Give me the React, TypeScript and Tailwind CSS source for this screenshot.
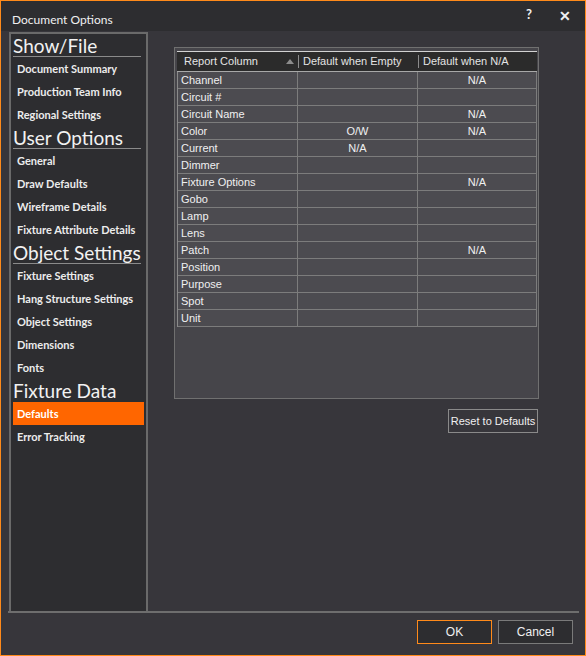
import React from 'react';

type Section = { title: string; line: boolean; items: string[] };

const sections: Section[] = [
  { title: 'Show/File', line: true, items: ['Document Summary', 'Production Team Info', 'Regional Settings'] },
  { title: 'User Options', line: true, items: ['General', 'Draw Defaults', 'Wireframe Details', 'Fixture Attribute Details'] },
  { title: 'Object Settings', line: true, items: ['Fixture Settings', 'Hang Structure Settings', 'Object Settings', 'Dimensions', 'Fonts'] },
  { title: 'Fixture Data', line: false, items: ['Defaults', 'Error Tracking'] },
];

const rows: [string, string, string][] = [
  ['Channel', '', 'N/A'],
  ['Circuit #', '', ''],
  ['Circuit Name', '', 'N/A'],
  ['Color', 'O/W', 'N/A'],
  ['Current', 'N/A', ''],
  ['Dimmer', '', ''],
  ['Fixture Options', '', 'N/A'],
  ['Gobo', '', ''],
  ['Lamp', '', ''],
  ['Lens', '', ''],
  ['Patch', '', 'N/A'],
  ['Position', '', ''],
  ['Purpose', '', ''],
  ['Spot', '', ''],
  ['Unit', '', ''],
];

const ui = "font-['Lato',sans-serif]";
const grid = "font-['Liberation_Sans',Arial,sans-serif]";

const Sidebar = () => (
  <div className="ml-[1px] mt-[1px] w-[139px] border-2 border-b-0 border-[#6a6a6a] bg-[#2d2d30] px-[2px]">
    {sections.map((s) => (
      <div key={s.title}>
        <div
          className={`mr-[3px] h-[23px] whitespace-nowrap pt-[1px] text-[19px] leading-[22px] text-[#f2f2f2] ${s.line ? 'border-b border-[#8a8a8a]' : ''}`}
        >
          {s.title}
        </div>
        {s.items.map((item) => (
          <div
            key={item}
            className={`flex h-[23px] items-center whitespace-nowrap pl-[4px] pt-[2px] text-[11px] font-bold ${
              item === 'Defaults' ? 'bg-[#ff6600] text-white' : 'text-[#ececec]'
            }`}
          >
            {item}
          </div>
        ))}
      </div>
    ))}
  </div>
);

const Table = () => (
  <div className="mt-[16px] h-[352px] w-[365px] border border-[#707070] bg-[#46454a] pl-[2px] pt-[3px]">
    <div className={`${grid} flex h-[21px] w-[360px] items-center border-y border-t-[#d2d2d2] border-b-[#a8a8a8] bg-[#2b2b2b] text-[11px] text-[#e4e4e4]`}>
      <div className="relative flex h-full w-[121px] items-center pl-[7px]">
        Report Column
        <svg className="absolute right-[4px] top-[7px]" width="8" height="5" viewBox="0 0 8 5">
          <path d="M0 5 L4 0 L8 5 Z" fill="#8c8c8c" />
        </svg>
      </div>
      <div className="h-[13px] w-px bg-[#8c8c8c]" />
      <div className="w-[119px] pl-[4px]">Default when Empty</div>
      <div className="h-[13px] w-px bg-[#8c8c8c]" />
      <div className="flex-1 pl-[4px]">Default when N/A</div>
    </div>
    <div className={`${grid} w-[360px] border-l border-[#8a8a8a] text-[11px] text-[#f0f0f0]`}>
      {rows.map(([name, empty, na]) => (
        <div key={name} className="flex h-[17px] border-b border-[#7c7c7c] bg-[#4c4b50]">
          <div className="flex w-[120px] items-center border-r border-[#7c7c7c] pl-[3px]">{name}</div>
          <div className="flex w-[120px] items-center justify-center border-r border-[#7c7c7c]">{empty}</div>
          <div className="flex w-[119px] items-center justify-center border-r border-[#7c7c7c]">{na}</div>
        </div>
      ))}
    </div>
  </div>
);

export default function App() {
  return (
    <div className={`${ui} flex h-[656px] w-[586px] flex-col border border-[#ff8a1a] bg-[#37363b]`}>
      <div className="flex h-[30px] shrink-0 items-center bg-[#2d2d30] pl-[11px] pr-[14px] text-[12px] text-[#f0f0f0]">
        <span className="pt-[7px]">Document Options</span>
        <span className="ml-auto pb-[2px] text-[13px] font-bold">?</span>
        <span className="ml-[27px] pb-[2px] text-[14px] font-bold">✕</span>
      </div>
      <div className="ml-[7px] mr-[6px] flex h-[582px] shrink-0 border-b-2 border-[#6e6e6e]">
        <Sidebar />
        <div className="flex flex-col pl-[26px]">
          <Table />
          <div className="mt-[10px] flex justify-end pr-[1px]">
            <button className={`${grid} h-[24px] w-[90px] border border-[#8a8a8a] bg-[#37363b] text-[11px] text-[#f0f0f0]`}>
              Reset to Defaults
            </button>
          </div>
        </div>
      </div>
      <div className={`${grid} flex justify-end gap-[6px] pr-[12px] pt-[7px] text-[12px] text-[#f0f0f0]`}>
        <button className="h-[24px] w-[75px] border border-[#ff8a1a] bg-[#2d2d30]">OK</button>
        <button className="h-[24px] w-[75px] border border-[#7a7a7a] bg-[#2d2d30]">Cancel</button>
      </div>
    </div>
  );
}
